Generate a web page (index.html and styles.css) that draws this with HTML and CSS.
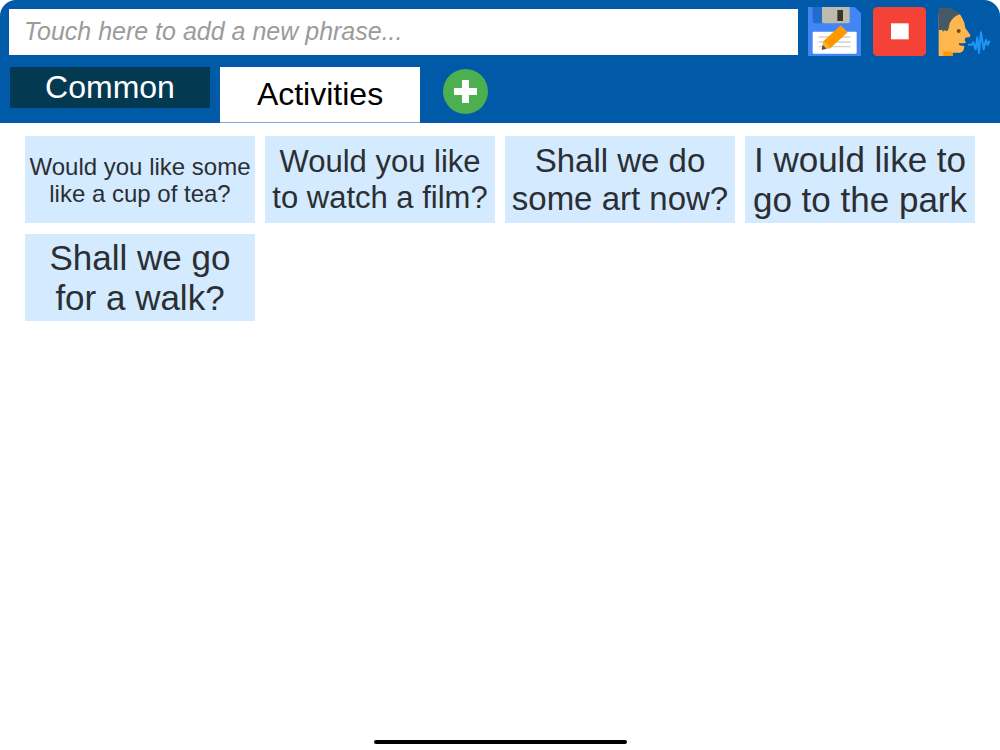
FILE: index.html
```html
<!DOCTYPE html>
<html lang="en">
<head>
    <meta charset="UTF-8">
    <meta name="viewport" content="width=device-width, initial-scale=1.0">
    <title>Phrases</title>
    <link rel="stylesheet" href="styles.css">
</head>
<body>
    <header class="header">
        <!-- phrase input and actions -->
        <form class="phrase-bar">
            <input class="phrase-input" type="text" aria-label="New phrase" placeholder="Touch here to add a new phrase...">
            <div class="actions">
                <button class="icon-btn" type="button" aria-label="Save phrase">
                    <svg viewBox="0 0 159 147" preserveAspectRatio="none">
                        <path d="M0 0H140L159 18V147H0z" fill="#4285f4"/>
                        <path d="M14 0H42V49H20Q14 49 14 43z" fill="#1f6fca"/>
                        <path d="M42 0H125V43Q125 49 119 49H48Q42 49 42 43z" fill="#bdbbae"/>
                        <path d="M88 9H105V42H88z" fill="#3a3528"/>
                        <rect x="14" y="74" width="132" height="66" rx="3" fill="#fff"/>
                        <path d="M32 90H128M32 105H128M32 119H128" stroke="#d5d1c8" stroke-width="4"/>
                        <path d="M98 55L119 76L67 124L46 103z" fill="#ff9800"/>
                        <path d="M46 103L67 124L41 128z" fill="#e9b52c"/>
                        <path d="M44 114L55 125L41 128z" fill="#4a4a3a"/>
                    </svg>
                </button>
                <button class="icon-btn" type="button" aria-label="Stop">
                    <svg viewBox="0 0 159 147" preserveAspectRatio="none">
                        <rect width="159" height="147" rx="13" fill="#f44336"/>
                        <rect x="54" y="49" width="53" height="48" fill="#fff"/>
                    </svg>
                </button>
                <button class="icon-btn" type="button" aria-label="Speak">
                    <svg viewBox="0 0 159 147" preserveAspectRatio="none">
                        <path d="M2 20L48 14L66 22L74 36Q81 48 82 63L97 84Q98 89 92 91L82 92L80 100L84 106L80 109H62L64 115L79 117Q78 136 66 137H44V147H2z" fill="#ffb74d"/>
                        <path d="M16 132L44 136V147H16z" fill="#ff9800"/>
                        <path d="M2 3Q47 -3 66 22Q45 28 35 49L32 64Q29 75 25 72Q17 66 16 75L12 69H2z" fill="#455a64"/>
                        <circle cx="62" cy="72" r="6" fill="#784719"/>
                        <path d="M90 113H102L106 106L113 127L118 91L123 138L129 76L137 127L144 99L149 114L155 101" fill="none" stroke="#2196f3" stroke-width="6" stroke-linejoin="round"/>
                    </svg>
                </button>
            </div>
        </form>
        <!-- categories -->
        <nav class="tabs">
            <button class="tab" type="button">Common</button>
            <button class="tab active" type="button">Activities</button>
            <button class="add-btn" type="button" aria-label="Add category">
                <svg viewBox="0 0 45 45">
                    <circle cx="22.5" cy="22.5" r="22.5" fill="#4caf50"/>
                    <path d="M11 22.5H34M22.5 11V34" stroke="#fff" stroke-width="7"/>
                </svg>
            </button>
        </nav>
    </header>

    <main class="phrases">
        <button class="phrase small" type="button">Would you like some<br>like a cup of tea?</button>
        <button class="phrase medium" type="button">Would you like<br>to watch a film?</button>
        <button class="phrase large" type="button">Shall we do<br>some art now?</button>
        <button class="phrase xlarge" type="button">I would like to<br>go to the park</button>
        <button class="phrase xlarge" type="button">Shall we go<br>for a walk?</button>
    </main>

    <div class="home-bar"></div>
</body>
</html>
```

FILE: styles.css
```css
*{
    box-sizing: border-box;
    margin: 0;
    padding: 0;
}
body{
    display: flex;
    flex-direction: column;
    min-height: 100vh;
    background: #fff;
    font-family: "Liberation Sans", Arial, sans-serif;
}
button{
    border: none;
    background: none;
    font-family: inherit;
    cursor: pointer;
}
svg{
    display: block;
    width: 100%;
    height: 100%;
}
.header{
    background: #005aa7;
    border-radius: 16px 16px 0 0;
    padding: 7px 9px 0;
}
.phrase-bar{
    display: flex;
    align-items: center;
    gap: 10px;
}
.phrase-input{
    flex: 1;
    min-width: 0;
    height: 46px;
    padding: 0 15px;
    border: none;
    background: #fff;
    font-family: inherit;
    font-size: 25px;
}
.phrase-input::placeholder{
    color: #9b9b9b;
    font-style: italic;
}
.actions{
    display: flex;
    gap: 12px;
}
.icon-btn{
    width: 53px;
    height: 49px;
}
.tabs{
    display: flex;
    align-items: flex-start;
    gap: 10px;
    margin-top: 11px;
    padding-left: 1px;
}
.tab{
    width: 200px;
    height: 41px;
    background: #033a52;
    color: #fff;
    font-size: 32px;
}
.tab.active{
    height: 56px;
    border-bottom: 1px solid #7fa6cc;
    background: #fff;
    color: #000;
}
.add-btn{
    width: 45px;
    height: 45px;
    margin: 2px 13px;
}
.phrases{
    display: grid;
    grid-template-columns: repeat(4, 1fr);
    gap: 11px 10px;
    padding: 13px 25px;
}
.phrase{
    height: 87px;
    background: #d3eaff;
    color: #2b2f33;
    white-space: nowrap;
}
.small{
    font-size: 24px;
    line-height: 27px;
}
.medium{
    font-size: 31px;
    line-height: 36px;
}
.large{
    font-size: 33px;
    line-height: 38px;
}
.xlarge{
    font-size: 35px;
    line-height: 40px;
}
.home-bar{
    width: 253px;
    height: 4px;
    margin: auto auto 6px;
    border-radius: 2px;
    background: #000;
}
```
